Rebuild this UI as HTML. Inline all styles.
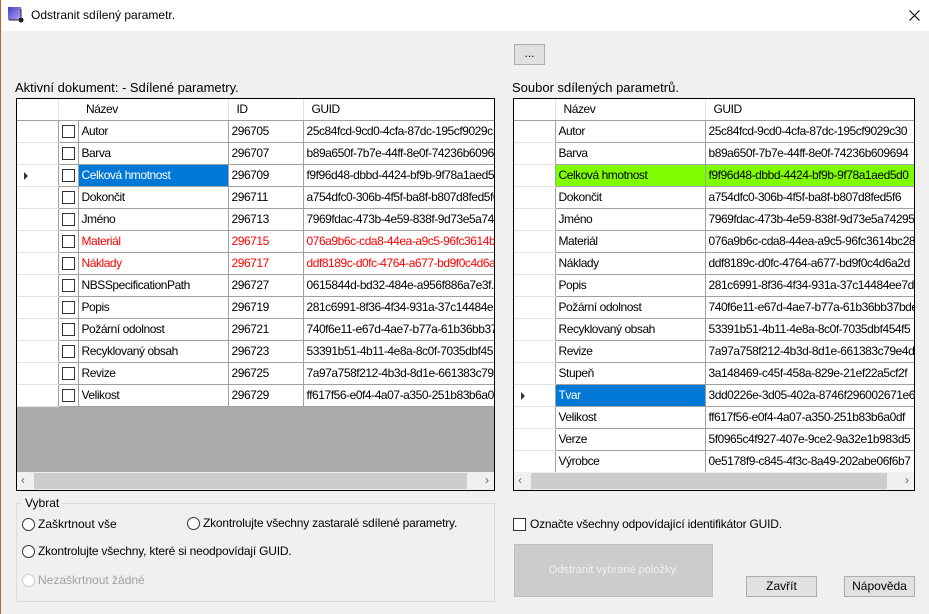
<!DOCTYPE html>
<html><head><meta charset="utf-8"><style>
*{box-sizing:border-box;margin:0;padding:0}
body{width:929px;height:614px;background:#f0f0f0;font-family:"Liberation Sans",sans-serif;font-size:12px;color:#000;position:relative;overflow:hidden}
.a{position:absolute}
.title{left:0;top:0;width:929px;height:31px;background:#fff}
.lb{left:0;top:0;width:1px;height:614px;background:#c0602a}
.grid{border:1px solid #000;background:#ababab;overflow:hidden}
table{border-collapse:collapse;table-layout:fixed;position:absolute;left:0;top:0}
td{height:22px;border:1px solid #a0a0a0;background:#fff;padding:0 0 0 3px;white-space:nowrap;overflow:hidden;font-size:12px;letter-spacing:-0.45px}
tr.h td{height:21px;border-top:none;border-color:#e3e3e3 #e3e3e3 #a0a0a0 #e3e3e3;padding-left:8px}
td.rh{border-color:#e3e3e3 #a0a0a0 #e3e3e3 #e3e3e3;border-left:none;padding:0;text-align:center;position:relative}
td.cb{padding:0;text-align:center}
.box{display:inline-block;width:13px;height:13px;border:1px solid #333;background:#fff;vertical-align:middle}
.sel{background:#0078d7;color:#fff}
.green{background:#80ff00}
.red{color:#f00}
.arr{width:0;height:0;border-left:4px solid #333;border-top:4px solid transparent;border-bottom:4px solid transparent;position:absolute;left:7px;top:7px}
.sb{height:18px;background:#f0f0f0;position:absolute;left:0;bottom:0;right:0}
.thumb{position:absolute;top:1px;height:16px;background:#cdcdcd}
.btn{border:1px solid #adadad;background:#e1e1e1;text-align:center;line-height:18px}
.radio{width:13px;height:13px;border:1px solid #333;border-radius:50%;background:#fff}
</style></head><body>
<div class="a title"></div>
<div class="a lb"></div>
<svg class="a" style="left:8px;top:7px" width="17" height="17" viewBox="0 0 17 17"><defs><linearGradient id="g" x1="0" y1="0" x2="1" y2="1"><stop offset="0" stop-color="#4040c0"/><stop offset="1" stop-color="#c0a0ff"/></linearGradient></defs><rect x="0" y="0" width="13" height="13" fill="url(#g)"/><path d="M13 2V16M1 13H16" stroke="#222" stroke-width="1"/><rect x="11" y="11" width="4" height="4" fill="#222"/></svg>
<div class="a" style="left:31px;top:8px;font-size:12px">Odstranit sdílený parametr.</div>
<svg class="a" style="left:909px;top:10px" width="11" height="11"><path d="M0.5 0.5L10.5 10.5M10.5 0.5L0.5 10.5" stroke="#000" stroke-width="1.1"/></svg>
<div class="a btn" style="left:514px;top:44px;width:31px;height:21px;line-height:16px">...</div>

<div class="a" style="left:15px;top:80px;font-size:13px">Aktivní dokument: - Sdílené parametry.</div>
<div class="a grid" style="left:16px;top:98px;width:479px;height:393px">
<table style="width:478px">
<colgroup><col style="width:41px"><col style="width:20px"><col style="width:150px"><col style="width:75px"><col style="width:192px"></colgroup>
<tr class="h"><td class="rh"></td><td style="border-right:none"></td><td style="border-left:none">Název</td><td>ID</td><td>GUID</td></tr>
<tr><td class="rh"></td><td class="cb"><span class="box"></span></td><td>Autor</td><td>296705</td><td>25c84fcd-9cd0-4cfa-87dc-195cf9029c...</td></tr>
<tr><td class="rh"></td><td class="cb"><span class="box"></span></td><td>Barva</td><td>296707</td><td>b89a650f-7b7e-44ff-8e0f-74236b609694</td></tr>
<tr><td class="rh"><span class="arr"></span></td><td class="cb"><span class="box"></span></td><td class="sel">Celková hmotnost</td><td>296709</td><td>f9f96d48-dbbd-4424-bf9b-9f78a1aed5d0</td></tr>
<tr><td class="rh"></td><td class="cb"><span class="box"></span></td><td>Dokončit</td><td>296711</td><td>a754dfc0-306b-4f5f-ba8f-b807d8fed5f6</td></tr>
<tr><td class="rh"></td><td class="cb"><span class="box"></span></td><td>Jméno</td><td>296713</td><td>7969fdac-473b-4e59-838f-9d73e5a74...</td></tr>
<tr><td class="rh"></td><td class="cb"><span class="box"></span></td><td class="red">Materiál</td><td class="red">296715</td><td class="red">076a9b6c-cda8-44ea-a9c5-96fc3614b...</td></tr>
<tr><td class="rh"></td><td class="cb"><span class="box"></span></td><td class="red">Náklady</td><td class="red">296717</td><td class="red">ddf8189c-d0fc-4764-a677-bd9f0c4d6a...</td></tr>
<tr><td class="rh"></td><td class="cb"><span class="box"></span></td><td>NBSSpecificationPath</td><td>296727</td><td>0615844d-bd32-484e-a956f886a7e3f...</td></tr>
<tr><td class="rh"></td><td class="cb"><span class="box"></span></td><td>Popis</td><td>296719</td><td>281c6991-8f36-4f34-931a-37c14484e...</td></tr>
<tr><td class="rh"></td><td class="cb"><span class="box"></span></td><td>Požární odolnost</td><td>296721</td><td>740f6e11-e67d-4ae7-b77a-61b36bb37...</td></tr>
<tr><td class="rh"></td><td class="cb"><span class="box"></span></td><td>Recyklovaný obsah</td><td>296723</td><td>53391b51-4b11-4e8a-8c0f-7035dbf45...</td></tr>
<tr><td class="rh"></td><td class="cb"><span class="box"></span></td><td>Revize</td><td>296725</td><td>7a97a758f212-4b3d-8d1e-661383c79...</td></tr>
<tr><td class="rh"></td><td class="cb"><span class="box"></span></td><td>Velikost</td><td>296729</td><td>ff617f56-e0f4-4a07-a350-251b83b6a0df</td></tr>
</table>
<div class="sb"><span class="a" style="left:4px;top:1px;color:#606060">‹</span><div class="thumb" style="left:17px;width:433px"></div><span class="a" style="right:5px;top:1px;color:#606060">›</span></div>
</div>

<div class="a" style="left:512px;top:80px;font-size:13px">Soubor sdílených parametrů.</div>
<div class="a grid" style="left:513px;top:98px;width:402px;height:393px">
<table style="width:401px">
<colgroup><col style="width:41px"><col style="width:150px"><col style="width:210px"></colgroup>
<tr class="h"><td class="rh"></td><td>Název</td><td>GUID</td></tr>
<tr><td class="rh"></td><td>Autor</td><td>25c84fcd-9cd0-4cfa-87dc-195cf9029c30</td></tr>
<tr><td class="rh"></td><td>Barva</td><td>b89a650f-7b7e-44ff-8e0f-74236b609694</td></tr>
<tr><td class="rh"></td><td class="green">Celková hmotnost</td><td class="green">f9f96d48-dbbd-4424-bf9b-9f78a1aed5d0</td></tr>
<tr><td class="rh"></td><td>Dokončit</td><td>a754dfc0-306b-4f5f-ba8f-b807d8fed5f6</td></tr>
<tr><td class="rh"></td><td>Jméno</td><td>7969fdac-473b-4e59-838f-9d73e5a74295</td></tr>
<tr><td class="rh"></td><td>Materiál</td><td>076a9b6c-cda8-44ea-a9c5-96fc3614bc28</td></tr>
<tr><td class="rh"></td><td>Náklady</td><td>ddf8189c-d0fc-4764-a677-bd9f0c4d6a2d</td></tr>
<tr><td class="rh"></td><td>Popis</td><td>281c6991-8f36-4f34-931a-37c14484ee7d</td></tr>
<tr><td class="rh"></td><td>Požární odolnost</td><td>740f6e11-e67d-4ae7-b77a-61b36bb37bde</td></tr>
<tr><td class="rh"></td><td>Recyklovaný obsah</td><td>53391b51-4b11-4e8a-8c0f-7035dbf454f5</td></tr>
<tr><td class="rh"></td><td>Revize</td><td>7a97a758f212-4b3d-8d1e-661383c79e4d</td></tr>
<tr><td class="rh"></td><td>Stupeň</td><td>3a148469-c45f-458a-829e-21ef22a5cf2f</td></tr>
<tr><td class="rh"><span class="arr"></span></td><td class="sel">Tvar</td><td>3dd0226e-3d05-402a-8746f296002671e6</td></tr>
<tr><td class="rh"></td><td>Velikost</td><td>ff617f56-e0f4-4a07-a350-251b83b6a0df</td></tr>
<tr><td class="rh"></td><td>Verze</td><td>5f0965c4f927-407e-9ce2-9a32e1b983d5</td></tr>
<tr><td class="rh"></td><td>Výrobce</td><td>0e5178f9-c845-4f3c-8a49-202abe06f6b7</td></tr>
</table>
<div class="sb"><span class="a" style="left:4px;top:1px;color:#606060">‹</span><div class="thumb" style="left:17px;width:356px"></div><span class="a" style="right:5px;top:1px;color:#606060">›</span></div>
</div>

<div class="a" style="left:16px;top:503px;width:479px;height:99px;border:1px solid #dcdcdc"></div>
<div class="a" style="left:22px;top:496px;background:#f0f0f0;padding:0 3px">Vybrat</div>
<div class="a radio" style="left:22px;top:518px"></div><div class="a" style="left:38px;top:517px">Zaškrtnout vše</div>
<div class="a radio" style="left:187px;top:517px"></div><div class="a" style="left:203px;top:516px;letter-spacing:-0.2px">Zkontrolujte všechny zastaralé sdílené parametry.</div>
<div class="a radio" style="left:22px;top:545px"></div><div class="a" style="left:38px;top:544px;letter-spacing:-0.2px">Zkontrolujte všechny, které si neodpovídají GUID.</div>
<div class="a radio" style="left:22px;top:574px;border-color:#ccc"></div><div class="a" style="left:38px;top:573px;color:#a0a0a0">Nezaškrtnout žádné</div>

<div class="a" style="left:513px;top:518px;width:13px;height:13px;border:1px solid #333;background:#fff"></div>
<div class="a" style="left:530px;top:517px;letter-spacing:-0.2px">Označte všechny odpovídající identifikátor GUID.</div>
<div class="a" style="left:514px;top:544px;width:199px;height:53px;background:#cccccc;border:1px solid #bfbfbf;color:#f0f0f0;text-align:center;line-height:51px;font-size:11px">Odstranit vybrané položky.</div>
<div class="a btn" style="left:746px;top:576px;width:71px;height:21px">Zavřít</div>
<div class="a btn" style="left:844px;top:576px;width:71px;height:21px">Nápověda</div>
</body></html>
